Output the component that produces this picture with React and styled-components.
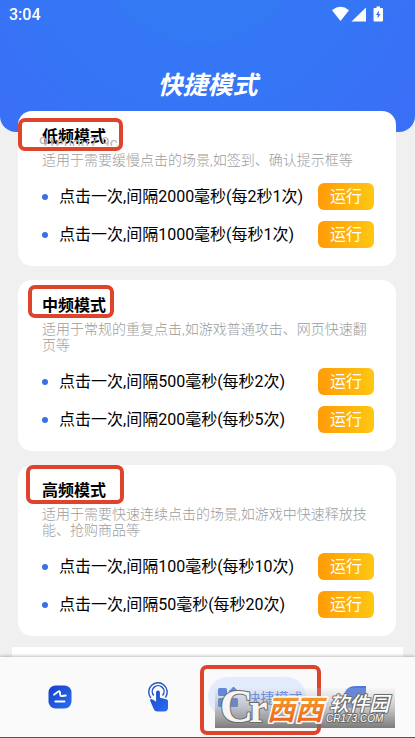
import React from "react";
import styled, { createGlobalStyle } from "styled-components";

const GlobalStyle = createGlobalStyle`
  * {
    box-sizing: border-box;
  }
  body {
    margin: 0;
    background-color: #f0f0f0;
    font-family: Roboto, "Noto Sans CJK SC", sans-serif;
    color: #000;
  }
  h1, h2, p, ul {
    margin: 0;
    padding: 0;
  }
`;

const Screen = styled.div`
  height: 100vh;
  display: flex;
  flex-direction: column;
  overflow: hidden;
`;

const Header = styled.header`
  flex-shrink: 0;
  color: #fff;
  border-radius: 0 0 16px 16px;
  padding-bottom: 30px;
  background: radial-gradient(
    circle at 48% -60px,
    #3379f4 0,
    #3379f4 104px,
    #3476f5 106px,
    #3476f5 170px,
    #3872f6 210px,
    #3a6ff7 280px
  );

  h1 {
    margin-top: 41px;
    font-size: 25px;
    line-height: 33px;
    font-weight: 700;
    font-style: italic;
    text-align: center;
  }
`;

const StatusBar = styled.div`
  height: 28px;
  padding: 0 32px 0 9px;
  display: flex;
  align-items: center;
  justify-content: space-between;
  font-size: 16px;
  font-weight: 500;

  svg {
    display: block;
  }
`;

const Main = styled.main`
  flex: 1;
  min-height: 0;
  margin-top: -21px;
  display: flex;
  flex-direction: column;
  gap: 11px;
  overflow: hidden;
`;

const CardList = styled.div`
  flex-shrink: 0;
  padding: 0 19px 0 18px;
  display: flex;
  flex-direction: column;
  gap: 14px;
`;

const Card = styled.section`
  position: relative;
  background-color: #fff;
  border-radius: 14px;
  padding: 17px 22px 18px 24px;

  h2 {
    font-size: 16px;
    line-height: 18px;
    font-weight: 700;
  }

  p {
    margin-top: 6px;
    font-size: 14px;
    line-height: 16px;
    font-weight: 300;
    color: #9c9c9c;
  }

  ul {
    margin-top: 15px;
    display: flex;
    flex-direction: column;
    gap: 11px;
    list-style: none;
  }
`;

const Option = styled.li`
  display: flex;
  align-items: center;
  font-size: 16px;
  line-height: 25px;
  white-space: nowrap;

  &::before {
    content: "";
    width: 6px;
    height: 6px;
    margin-right: 11px;
    border-radius: 50%;
    background-color: #3b70e4;
  }
`;

const RunButton = styled.button`
  width: 56px;
  height: 27px;
  margin-left: auto;
  padding: 0;
  border: 0;
  border-radius: 6px;
  background: linear-gradient(90deg, #ff9b07, #ffc711);
  color: #fff;
  font-family: inherit;
  font-size: 16px;
  line-height: 27px;
`;

const Mark = styled.span`
  position: absolute;
  top: ${(props) => props.$top}px;
  left: ${(props) => props.$left}px;
  width: ${(props) => props.$width}px;
  height: ${(props) => props.$height}px;
  border: 4px solid #de432c;
  border-radius: 7px;
  pointer-events: none;
`;

const Ghost = styled.span`
  position: absolute;
  top: 24px;
  left: 21px;
  height: 11px;
  overflow: hidden;
  font-size: 15px;
  line-height: 16px;
  color: #b5b5b5;
`;

const NextPanel = styled.div`
  flex: 1;
  margin: 0 12px;
  background-color: #fff;
`;

const TabBar = styled.nav`
  position: relative;
  flex-shrink: 0;
  height: 81px;
  padding: 0 11px;
  display: flex;
  background-color: #fafafa;
  border-bottom: 1px solid #55565c;
  box-shadow: 0 -1px 3px rgba(0, 0, 0, 0.25);
`;

const Tab = styled.a`
  position: relative;
  flex: 1;
  display: flex;
  align-items: center;
  justify-content: center;
  text-decoration: none;

  svg {
    display: block;
  }
`;

const Pill = styled.span`
  width: 100%;
  height: 40px;
  padding-left: 10px;
  display: flex;
  align-items: center;
  gap: 8px;
  border-radius: 20px;
  background-color: #e3ebfd;
  color: #5783e2;
  font-size: 14px;
  white-space: nowrap;
`;

const Watermark = styled.div`
  position: absolute;
  right: 20px;
  bottom: 9px;
  pointer-events: none;
  background: linear-gradient(
    rgba(225, 225, 225, 0.15),
    rgba(150, 150, 150, 0.5) 50%,
    rgba(110, 110, 110, 0.9)
  );

  svg {
    display: block;
  }
`;

const modes = [
  {
    title: "低频模式",
    text: "适用于需要缓慢点击的场景,如签到、确认提示框等",
    options: ["点击一次,间隔2000毫秒(每2秒1次)", "点击一次,间隔1000毫秒(每秒1次)"],
    mark: { $top: 7, $left: 0, $width: 105, $height: 33 },
    ghost: "91euou7.9c",
  },
  {
    title: "中频模式",
    text: "适用于常规的重复点击,如游戏普通攻击、网页快速翻页等",
    options: ["点击一次,间隔500毫秒(每秒2次)", "点击一次,间隔200毫秒(每秒5次)"],
    mark: { $top: 5, $left: 10, $width: 86, $height: 33 },
  },
  {
    title: "高频模式",
    text: "适用于需要快速连续点击的场景,如游戏中快速释放技能、抢购商品等",
    options: ["点击一次,间隔100毫秒(每秒10次)", "点击一次,间隔50毫秒(每秒20次)"],
    mark: { $top: 0, $left: 8, $width: 98, $height: 39 },
  },
];

const StatusIcons = () => (
  <svg width="52" height="16" viewBox="0 0 52 16" fill="#fff" aria-hidden="true">
    <path d="M1 4.2Q9.500-2.600 18 4.200L9.500 15Z" />
    <path d="M35 1.500V15.500H20.500Z" />
    <path
      fillRule="evenodd"
      d="M45.500 0.500h3.500v1.500h2q1 0 1 1v11.500q0 1-1 1h-7.500q-1 0-1-1V3q0-1 1-1h2zM47.800 4.500l-2.800 4.500h1.700v3.500l2.800-4.500h-1.700z"
    />
  </svg>
);

const ScriptIcon = () => (
  <svg width="24" height="24" viewBox="0 0 24 24" fill="none" aria-hidden="true">
    <defs>
      <linearGradient id="script" x1="0" y1="0" x2="1" y2="1">
        <stop stopColor="#163fc8" />
        <stop offset="1" stopColor="#2c70ee" />
      </linearGradient>
    </defs>
    <rect x="0.500" y="0.500" width="23" height="23" rx="7" fill="url(#script)" />
    <path
      d="M6 9.800L10 6.700Q12 5.500 12 7.500L12.200 10Q12.400 11.600 14 11L17.800 10.500M7.300 16.500H16.500"
      stroke="#fff"
      strokeWidth="1.800"
      strokeLinecap="round"
      strokeLinejoin="round"
    />
  </svg>
);

const TapIcon = () => (
  <svg width="22" height="30" viewBox="0 0 22 30" fill="none" aria-hidden="true">
    <defs>
      <linearGradient id="tap" x1="0" y1="0" x2="1" y2="1">
        <stop stopColor="#1746c8" />
        <stop offset="1" stopColor="#2c70f0" />
      </linearGradient>
    </defs>
    <path
      d="M3.600 15.500A9.200 9.200 0 1 1 18.700 15M6.400 13A5.900 5.900 0 1 1 15.900 13"
      stroke="#2455bd"
      strokeWidth="1.400"
      strokeLinecap="round"
    />
    <path
      d="M9.100 10.500q0-1.900 1.900-1.900t1.900 1.900v5.200l6.600 1.500q1.500.4 1.500 2v6.300q0 4-4 4H10.500q-3 0-4-3L3.200 18.700q-.4-1.500 1-1.700l1.800.8 3.100 2z"
      fill="url(#tap)"
    />
  </svg>
);

const GridIcon = () => (
  <svg width="21" height="22" viewBox="0 0 21 22" fill="#4d78dc" aria-hidden="true">
    <rect x="0" y="2" width="9" height="8" rx="1.500" />
    <rect x="0" y="12" width="9" height="9" rx="1.500" />
    <rect x="11" y="12" width="9" height="9" rx="1.500" />
    <rect x="12" y="2" width="7" height="7" rx="1" transform="rotate(45 15.500 5.500)" />
  </svg>
);

const LeafIcon = () => (
  <svg width="22" height="22" viewBox="0 0 22 22" aria-hidden="true">
    <path d="M22 0V13Q22 22 13 22H0V12Q0 0 12 0Z" fill="#5079dc" />
    <path d="M0 12Q8 11 11 22H0Z" fill="#7f9fe9" />
  </svg>
);

const SiteLogo = () => (
  <svg width="180" height="40" viewBox="0 0 180 40" role="img" aria-label="西西软件园 CR173.COM">
    <defs>
      <linearGradient id="orange" x1="0" y1="0" x2="0" y2="1">
        <stop stopColor="#f9ae2f" />
        <stop offset="1" stopColor="#e9571d" />
      </linearGradient>
    </defs>
    <g paintOrder="stroke" strokeLinejoin="round">
      <g
        fontFamily="Liberation Serif, serif"
        fontWeight="700"
        fill="#f5f5f5"
        stroke="#6c6c6c"
        strokeWidth="2"
      >
        <text x="5" y="34" fontSize="46">
          C
        </text>
        <text x="34" y="34" fontSize="42">
          r
        </text>
      </g>
      <g fontFamily="Noto Sans CJK SC, sans-serif" fontStyle="italic">
        <text
          x="52"
          y="32"
          fontSize="28"
          fontWeight="700"
          fill="url(#orange)"
          stroke="#fff"
          strokeWidth="3"
        >
          西西
        </text>
        <text
          x="114"
          y="23"
          fontSize="20"
          fontWeight="500"
          fill="#fff"
          stroke="#6c6c6c"
          strokeWidth="2"
        >
          软件园
        </text>
      </g>
      <text
        x="111"
        y="34"
        fontFamily="Liberation Sans, sans-serif"
        fontSize="10"
        fontStyle="italic"
        fill="#fff"
        stroke="#6c6c6c"
        strokeWidth="2"
      >
        CR173.COM
      </text>
    </g>
  </svg>
);

const ModeCard = ({ mode }) => (
  <Card>
    <h2>{mode.title}</h2>
    {mode.ghost && <Ghost aria-hidden="true">{mode.ghost}</Ghost>}
    <p>{mode.text}</p>
    <ul>
      {mode.options.map((option) => (
        <Option key={option}>
          {option}
          <RunButton type="button">运行</RunButton>
        </Option>
      ))}
    </ul>
    <Mark {...mode.mark} />
  </Card>
);

export default function App() {
  return (
    <>
      <GlobalStyle />
      <Screen>
        <Header>
          <StatusBar>
            <span>3:04</span>
            <StatusIcons />
          </StatusBar>
          <h1>快捷模式</h1>
        </Header>
        <Main>
          <CardList>
            {modes.map((mode) => (
              <ModeCard key={mode.title} mode={mode} />
            ))}
          </CardList>
          <NextPanel />
        </Main>
        <TabBar>
          <Tab href="#script" aria-label="脚本">
            <ScriptIcon />
          </Tab>
          <Tab href="#tap" aria-label="点击">
            <TapIcon />
          </Tab>
          <Tab href="#quick" aria-current="page">
            <Pill>
              <GridIcon />
              快捷模式
            </Pill>
            <Mark $top={8} $left={-8} $width={121} $height={70} />
          </Tab>
          <Tab href="#mine" aria-label="我的">
            <LeafIcon />
          </Tab>
          <Watermark>
            <SiteLogo />
          </Watermark>
        </TabBar>
      </Screen>
    </>
  );
}
